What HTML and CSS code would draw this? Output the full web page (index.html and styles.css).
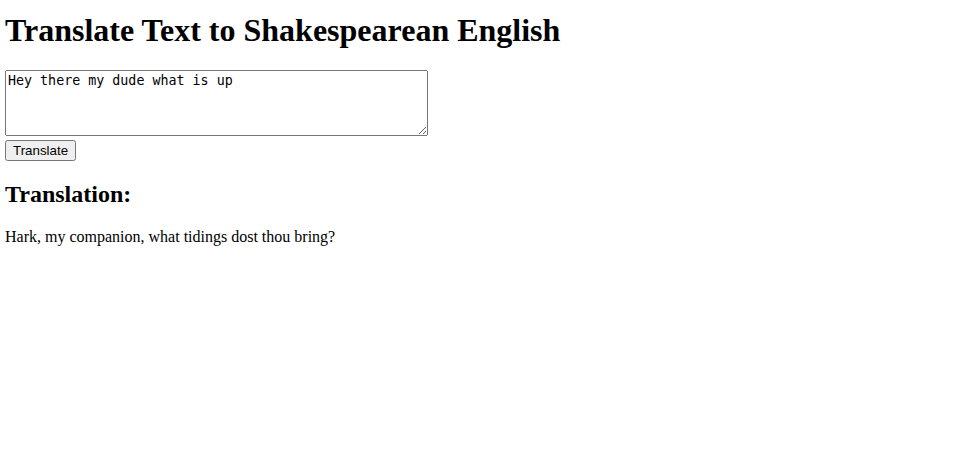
FILE: index.html
```html
<!DOCTYPE html>
<html lang="en">
<head>
<meta charset="utf-8">
<title>Shakespearean Translator</title>
<link rel="stylesheet" href="styles.css">
</head>
<body>
<h1 class="title">Translate Text to Shakespearean English</h1>
<form class="form">
<textarea class="input" rows="4" cols="50">Hey there my dude what is up</textarea><br>
<button type="button" class="btn">Translate</button>
</form>
<h2 class="subtitle">Translation:</h2>
<p class="result">Hark, my companion, what tidings dost thou bring?</p>
</body>
</html>
```
FILE: styles.css
```css
body {
  margin: 5px;
  font-family: "Liberation Serif", serif;
  font-size: 16px;
  color: #000;
  background: #fff;
}
.title {
  font-size: 32px;
  margin: 7px 0 21px;
}
.form {
  margin: 0;
}
.input {
  width: 423px;
  height: 66px;
  box-sizing: border-box;
  font-family: "DejaVu Sans Mono", monospace;
  font-size: 13.33px;
  margin: 0;
}
.btn {
  font-family: "Liberation Sans", sans-serif;
  font-size: 13.33px;
  margin-top: 0;
}
.subtitle {
  font-size: 24px;
}
.result {
  font-size: 16px;
}
```
